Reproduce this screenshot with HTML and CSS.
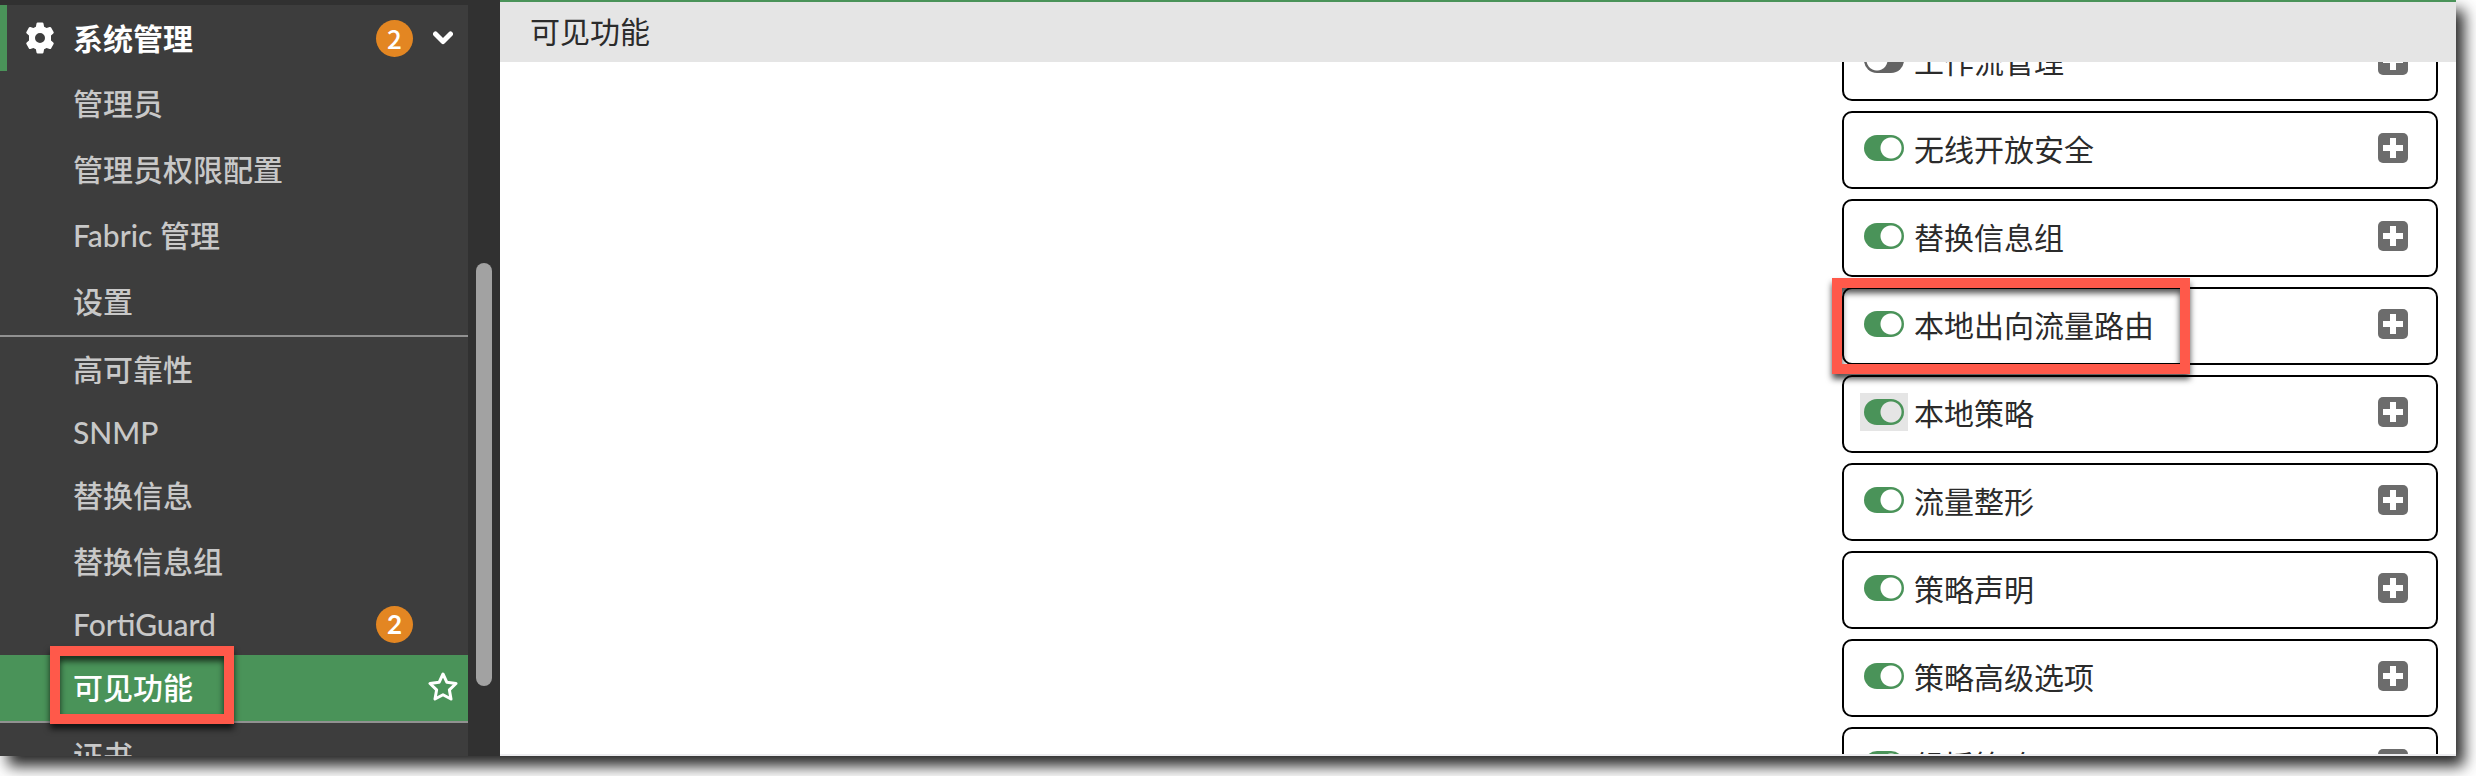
FILE: index.html
```html
<!DOCTYPE html>
<html lang="zh-CN">
<head>
    <meta charset="UTF-8">
    <meta name="viewport" content="width=device-width, initial-scale=1.0">
    <title>可见功能</title>
    <link rel="stylesheet" href="styles.css">
</head>
<body>
    <div class="window">
        <nav class="sidebar">
            <div class="menu">
                <button class="menu-head">
                    <svg class="gear" viewBox="0 0 32 32" aria-hidden="true">
                        <path fill-rule="evenodd" d="M12.500 1.500Q12.700 0.500 13.700 0.500H18.300Q19.300 0.500 19.500 1.500L20.100 4.700L22.600 6.100L25.600 5.100Q26.600 4.800 27.100 5.600L29.600 9.900Q30.100 10.800 29.300 11.500L27 13.500V18.500L29.300 20.500Q30.100 21.200 29.600 22.100L27.100 26.400Q26.600 27.200 25.600 26.900L22.600 25.900L20.100 27.300L19.500 30.500Q19.300 31.500 18.300 31.500H13.700Q12.700 31.500 12.500 30.500L11.900 27.300L9.400 25.900L6.400 26.900Q5.400 27.200 4.900 26.400L2.400 22.100Q1.900 21.200 2.700 20.500L5 18.500V13.500L2.700 11.500Q1.900 10.800 2.400 9.900L4.900 5.600Q5.400 4.800 6.400 5.100L9.400 6.100L11.900 4.700ZM16 11A5 5 0 1 0 16 21A5 5 0 1 0 16 11Z"/>
                    </svg>
                    <span class="menu-title">系统管理</span>
                    <span class="badge badge-cjk">2</span>
                    <svg class="chevron" viewBox="0 0 20 14" aria-hidden="true">
                        <path d="M2.500 3L10 10.500L17.500 3"/>
                    </svg>
                </button>
                <a class="item" href="#">管理员</a>
                <a class="item" href="#">管理员权限配置</a>
                <a class="item" href="#">Fabric 管理</a>
                <a class="item" href="#">设置</a>
                <hr>
                <a class="item" href="#">高可靠性</a>
                <a class="item latin" href="#">SNMP</a>
                <a class="item" href="#">替换信息</a>
                <a class="item" href="#">替换信息组</a>
                <a class="item latin" href="#">FortiGuard <span class="badge">2</span></a>
                <a class="item active" href="#">可见功能
                    <svg class="star" viewBox="0 0 30 30" aria-hidden="true">
                        <path d="M15 2L18.900 10.300L28 11.500L21.400 17.900L23 27L15 22.700L7 27L8.600 17.900L2 11.500L11.100 10.300Z"/>
                    </svg>
                    <span class="callout callout-menu"></span>
                </a>
                <hr>
                <a class="item" href="#">证书</a>
            </div>
            <div class="scrollbar"><div class="thumb"></div></div>
        </nav>

        <main class="main">
            <h1 class="title">可见功能</h1>
            <div class="content">
                <div class="features">
                    <div class="card">
                        <label><input type="checkbox">工作流管理</label>
                        <button class="expand" aria-label="展开"></button>
                    </div>
                    <div class="card">
                        <label><input type="checkbox" checked>无线开放安全</label>
                        <button class="expand" aria-label="展开"></button>
                    </div>
                    <div class="card">
                        <label><input type="checkbox" checked>替换信息组</label>
                        <button class="expand" aria-label="展开"></button>
                    </div>
                    <div class="card">
                        <label><input type="checkbox" checked>本地出向流量路由</label>
                        <button class="expand" aria-label="展开"></button>
                        <span class="callout callout-card"></span>
                    </div>
                    <div class="card">
                        <label><input class="focused" type="checkbox" checked>本地策略</label>
                        <button class="expand" aria-label="展开"></button>
                    </div>
                    <div class="card">
                        <label><input type="checkbox" checked>流量整形</label>
                        <button class="expand" aria-label="展开"></button>
                    </div>
                    <div class="card">
                        <label><input type="checkbox" checked>策略声明</label>
                        <button class="expand" aria-label="展开"></button>
                    </div>
                    <div class="card">
                        <label><input type="checkbox" checked>策略高级选项</label>
                        <button class="expand" aria-label="展开"></button>
                    </div>
                    <div class="card">
                        <label><input type="checkbox" checked>组播策略</label>
                        <button class="expand" aria-label="展开"></button>
                    </div>
                </div>
            </div>
        </main>
    </div>
</body>
</html>
```
FILE: styles.css
```css
* {
    box-sizing: border-box;
}
body {
    margin: 0;
    height: 100vh;
    padding: 0 20px 20px 0;
    overflow: hidden;
    background: #fff;
    color: #2b2b2b;
    font-family: Lato, "Noto Sans CJK SC", sans-serif;
    font-size: 30px;
    line-height: 42px;
}
button {
    border: none;
    font: inherit;
    cursor: pointer;
}
.window {
    display: flex;
    height: 100%;
    background: #fff;
    box-shadow: 8px 10px 14px rgba(0, 0, 0, 0.85);
}

/* sidebar */
.sidebar {
    display: flex;
    flex: 0 0 500px;
    overflow: hidden;
    background: #313131;
}
.menu {
    flex: 1;
    align-self: flex-start;
    margin-top: 5px;
    background: #3d3d3d;
    font-weight: 500;
}
.menu-head {
    display: flex;
    align-items: center;
    width: 100%;
    height: 66px;
    padding: 0 15px 0 17px;
    border-left: 7px solid #4a9359;
    background: none;
    color: #fff;
    font-weight: bold;
    text-align: left;
}
.gear {
    width: 32px;
    height: 32px;
    margin-right: 17px;
    fill: #fff;
}
.menu-title {
    flex: 1;
}
.chevron {
    width: 20px;
    height: 14px;
    margin-left: 20px;
    fill: none;
    stroke: #fff;
    stroke-width: 5;
    stroke-linecap: round;
    stroke-linejoin: round;
}
.badge {
    display: flex;
    align-items: center;
    justify-content: center;
    width: 37px;
    height: 37px;
    border-radius: 50%;
    background: #e38622;
    color: #fff;
    font-size: 26px;
    font-weight: bold;
}
.badge-cjk {
    font-family: "Noto Sans CJK SC", sans-serif;
    font-weight: 500;
}
.item {
    display: flex;
    align-items: center;
    justify-content: space-between;
    position: relative;
    padding: 11px 55px 13px 73px;
    color: #c8c8c8;
    text-decoration: none;
}
.latin {
    line-height: 36px;
}
/* the badge is taller than the text line */
.latin .badge {
    margin: -1px 0;
}
.item.active {
    padding-right: 10px;
    background: #4a9359;
    color: #fff;
}
.star {
    width: 30px;
    height: 30px;
    fill: none;
    stroke: #fff;
    stroke-width: 3;
    stroke-linejoin: round;
}
hr {
    height: 2px;
    margin: 0;
    border: none;
    background: #919191;
}
.scrollbar {
    flex: 0 0 32px;
    padding: 0 8px;
}
.thumb {
    height: 56%;
    margin-top: 263px;
    border-radius: 8px;
    background: #a2a2a2;
}

/* main area */
.main {
    display: flex;
    flex-direction: column;
    flex: 1;
    min-width: 0;
    border-bottom: 2px solid #ececef;
}
.title {
    flex: none;
    margin: 0;
    padding: 8px 30px 10px;
    border-top: 2px solid #4a9359;
    background: #e5e5e5;
    font-size: 30px;
    font-weight: normal;
}
.content {
    display: grid;
    grid-template-columns: repeat(3, 1fr);
    column-gap: 66px;
    flex: 1;
    min-height: 0;
    padding: 0 18px;
    overflow: hidden;
}
.features {
    display: flex;
    flex-direction: column;
    grid-column: 3;
    gap: 10px;
    /* list is scrolled half way under the title */
    margin-top: -39px;
}
.card {
    display: flex;
    align-items: flex-start;
    justify-content: space-between;
    flex: none;
    position: relative;
    padding: 16px 28px 18px 16px;
    border: 2px solid #000;
    border-radius: 10px;
    line-height: 40px;
}
.card label {
    display: flex;
}
.card input {
    --knob: #fff;
    appearance: none;
    width: 48px;
    height: 38px;
    margin: 0 6px 0 0;
    padding: 6px 4px;
}
.card input::before {
    content: "";
    display: block;
    width: 40px;
    height: 26px;
    border-radius: 13px;
    background: radial-gradient(circle at 13px 13px, var(--knob) 10px, #636363 11px);
}
.card input:checked::before {
    background: radial-gradient(circle at 27px 13px, var(--knob) 10px, #4a9359 11px);
}
.card input.focused {
    --knob: #e5e5e5;
    background: #e5e5e5;
}
.expand {
    width: 30px;
    height: 30px;
    margin-top: 4px;
    padding: 0;
    border-radius: 5px;
    background:
        linear-gradient(#fff, #fff) center / 20px 6px no-repeat,
        linear-gradient(#fff, #fff) center / 6px 20px no-repeat,
        #6c6c6c;
}

/* red highlight frames */
.callout {
    position: absolute;
    border: 10px solid #ff594a;
    filter: drop-shadow(0 5px 3px rgba(0, 0, 0, 0.7));
    pointer-events: none;
    z-index: 1;
}
.callout-menu {
    top: -9px;
    bottom: -3px;
    left: 50px;
    width: 184px;
}
.callout-card {
    top: -11px;
    bottom: -11px;
    left: -12px;
    width: 358px;
}
```
